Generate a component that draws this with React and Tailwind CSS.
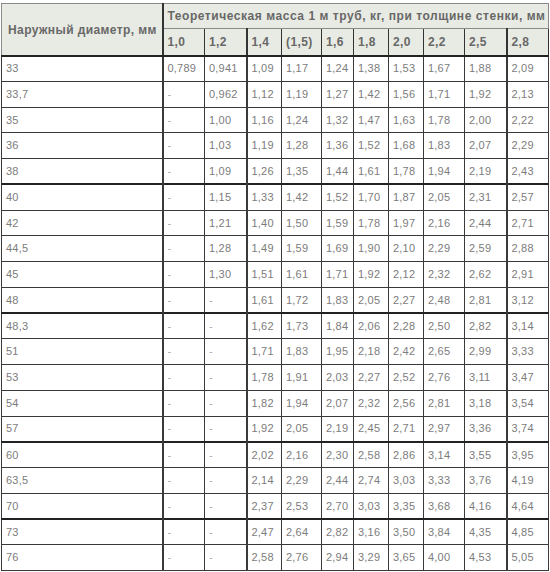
const SIZES = ['1,0', '1,2', '1,4', '(1,5)', '1,6', '1,8', '2,0', '2,2', '2,5', '2,8']
const WIDTHS = [161, 42, 42, 35, 40, 32, 35, 35, 41, 42, 42]

const ROWS = [
  ['33', '0,789', '0,941', '1,09', '1,17', '1,24', '1,38', '1,53', '1,67', '1,88', '2,09'],
  ['33,7', '-', '0,962', '1,12', '1,19', '1,27', '1,42', '1,56', '1,71', '1,92', '2,13'],
  ['35', '-', '1,00', '1,16', '1,24', '1,32', '1,47', '1,63', '1,78', '2,00', '2,22'],
  ['36', '-', '1,03', '1,19', '1,28', '1,36', '1,52', '1,68', '1,83', '2,07', '2,29'],
  ['38', '-', '1,09', '1,26', '1,35', '1,44', '1,61', '1,78', '1,94', '2,19', '2,43'],
  ['40', '-', '1,15', '1,33', '1,42', '1,52', '1,70', '1,87', '2,05', '2,31', '2,57'],
  ['42', '-', '1,21', '1,40', '1,50', '1,59', '1,78', '1,97', '2,16', '2,44', '2,71'],
  ['44,5', '-', '1,28', '1,49', '1,59', '1,69', '1,90', '2,10', '2,29', '2,59', '2,88'],
  ['45', '-', '1,30', '1,51', '1,61', '1,71', '1,92', '2,12', '2,32', '2,62', '2,91'],
  ['48', '-', '-', '1,61', '1,72', '1,83', '2,05', '2,27', '2,48', '2,81', '3,12'],
  ['48,3', '-', '-', '1,62', '1,73', '1,84', '2,06', '2,28', '2,50', '2,82', '3,14'],
  ['51', '-', '-', '1,71', '1,83', '1,95', '2,18', '2,42', '2,65', '2,99', '3,33'],
  ['53', '-', '-', '1,78', '1,91', '2,03', '2,27', '2,52', '2,76', '3,11', '3,47'],
  ['54', '-', '-', '1,82', '1,94', '2,07', '2,32', '2,56', '2,81', '3,18', '3,54'],
  ['57', '-', '-', '1,92', '2,05', '2,19', '2,45', '2,71', '2,97', '3,36', '3,74'],
  ['60', '-', '-', '2,02', '2,16', '2,30', '2,58', '2,86', '3,14', '3,55', '3,95'],
  ['63,5', '-', '-', '2,14', '2,29', '2,44', '2,74', '3,03', '3,33', '3,76', '4,19'],
  ['70', '-', '-', '2,37', '2,53', '2,70', '3,03', '3,35', '3,68', '4,16', '4,64'],
  ['73', '-', '-', '2,47', '2,64', '2,82', '3,16', '3,50', '3,84', '4,35', '4,85'],
  ['76', '-', '-', '2,58', '2,76', '2,94', '3,29', '3,65', '4,00', '4,53', '5,05'],
]

// rows whose top edge is drawn heavier in the scan
const HEAVY_TOP = [5, 10, 15, 18]
// columns whose left edge is heavier
const HEAVY_LEFT = [1, 3, 10]

export default function App() {
  return (
    <div className="w-[550px] h-[572px] bg-white pl-px pt-[3px]" style={{ fontFamily: '"Liberation Sans", Arial, sans-serif' }}>
      <table className="table-fixed border-collapse w-[547px]">
        <colgroup>
          {WIDTHS.map((w, i) => <col key={i} style={{ width: w }} />)}
        </colgroup>
        <thead>
          <tr className="h-[25px] bg-[#e8ebe4]">
            <th rowSpan={2} className="border border-[#8a8a8a] border-b-2 border-b-[#222] text-left align-middle pl-[6px] pt-[2px] text-[12px] font-bold text-[#686868] tracking-[0.4px] whitespace-nowrap">
              Наружный диаметр, мм
            </th>
            <th colSpan={10} className="border border-[#8a8a8a] border-l-2 border-l-[#333] text-left pl-[4px] text-[12px] font-bold text-[#686868] tracking-[0.55px] whitespace-nowrap">
              Теоретическая масса 1 м труб, кг, при толщине стенки, мм
            </th>
          </tr>
          <tr className="h-[27px] bg-[#e8ebe4]">
            {SIZES.map((s, i) => (
              <th key={s} className={`border border-[#333] border-b-2 border-b-[#222] border-t-[#999] text-left pl-[4px] text-[12px] font-bold text-[#686868] tracking-[0.4px] ${HEAVY_LEFT.includes(i + 1) ? 'border-l-2' : ''}`}>
                {s}
              </th>
            ))}
          </tr>
        </thead>
        <tbody>
          {ROWS.map((r, ri) => (
            <tr key={r[0]} className="h-[25.75px]">
              {r.map((v, ci) => (
                <td key={ci} className={`border border-[#3a3a3a] pl-[4px] text-[11px] text-[#7c7c7c] tracking-[0.2px] ${HEAVY_TOP.includes(ri) ? 'border-t-2 border-t-[#222]' : ''} ${HEAVY_LEFT.includes(ci) ? 'border-l-2' : ''} ${v === '-' ? 'text-[#aaa]' : ''}`}>
                  {v}
                </td>
              ))}
            </tr>
          ))}
        </tbody>
      </table>
    </div>
  )
}
